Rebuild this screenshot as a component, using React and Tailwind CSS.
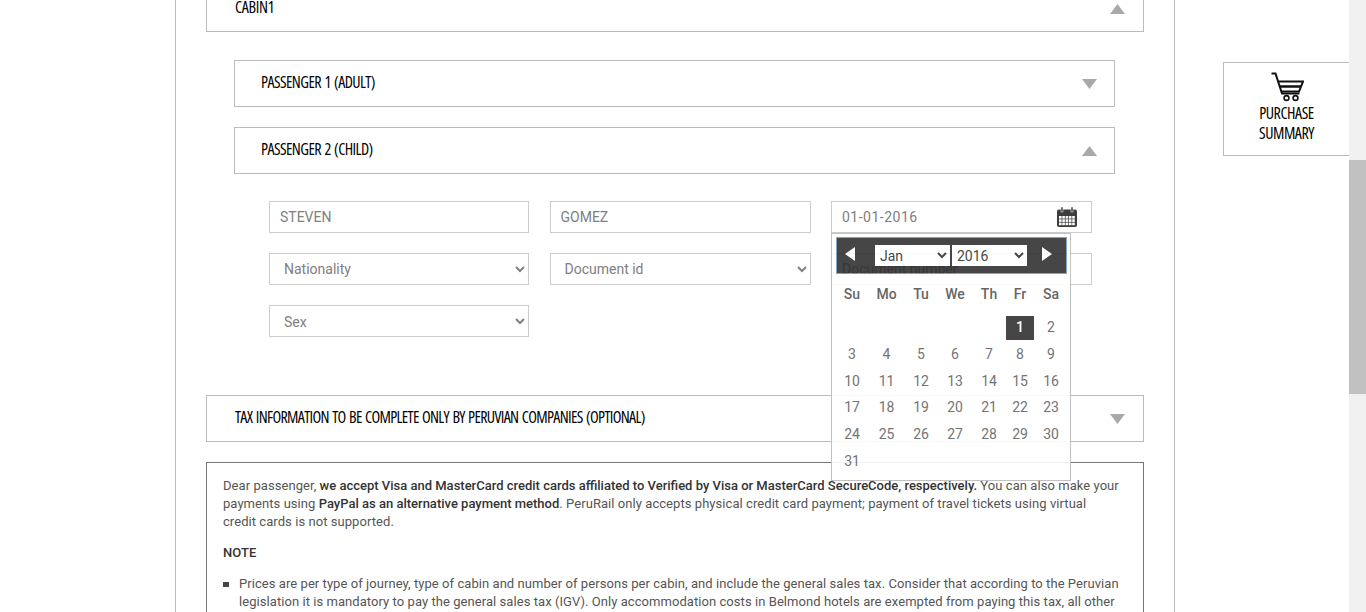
import React from "react";

const heading = "font-['Open_Sans',sans-serif] [font-stretch:75%] text-[16px] text-black uppercase";
const field = "h-[32px] w-full border border-[#ccc] bg-white text-[14px] text-[#808080] outline-none";

const days = [
  ["", "", "", "", "", "1", "2"],
  ["3", "4", "5", "6", "7", "8", "9"],
  ["10", "11", "12", "13", "14", "15", "16"],
  ["17", "18", "19", "20", "21", "22", "23"],
  ["24", "25", "26", "27", "28", "29", "30"],
  ["31", "", "", "", "", "", ""],
];

function Arrow({ up }) {
  return (
    <svg width="15" height="10" viewBox="0 0 15 10" className="shrink-0">
      <path d={up ? "M7.5 0L15 10H0z" : "M0 0H15L7.5 10z"} fill="#a9a9a9" />
    </svg>
  );
}

function Bar({ title, up, className, pad, track = "tracking-[-.55px]" }) {
  return (
    <div className={`flex items-center justify-between border border-[#bbb] bg-white ${pad} ${className}`}>
      <span className={`${heading} ${track} [word-spacing:1px] pb-[4px]`}>{title}</span>
      <Arrow up={up} />
    </div>
  );
}

function Pick({ label, className = "" }) {
  return (
    <select className={`${field} pl-[10px] ${className}`} defaultValue={label}>
      <option>{label}</option>
    </select>
  );
}

function CalendarIcon() {
  const cells = [];
  for (let r = 0; r < 3; r++) {
    for (let c = 0; c < 5; c++) {
      cells.push(<rect key={`${r}-${c}`} x={2 + c * 3.3} y={9 + r * 3.3} width="2.6" height="2.6" fill="#fff" />);
    }
  }
  return (
    <svg width="20" height="20" viewBox="0 0 20 20" className="absolute right-[15px] top-[6px]">
      <rect x="0" y="2.5" width="20" height="17.5" rx="2" fill="#3d3d3d" />
      <rect x="4" y="0" width="2" height="5" fill="#3d3d3d" stroke="#fff" strokeWidth="0.5" />
      <rect x="14" y="0" width="2" height="5" fill="#3d3d3d" stroke="#fff" strokeWidth="0.5" />
      {cells}
    </svg>
  );
}

function CartIcon() {
  return (
    <svg width="34" height="30" viewBox="0 0 34 30">
      <path d="M1.5 1.5H5.5L12 21.5H29.5" fill="none" stroke="#111" strokeWidth="2" />
      <path d="M8 9.5H33L29 19.5H11" fill="none" stroke="#111" strokeWidth="2" />
      <path d="M9.5 14.5H31" stroke="#111" strokeWidth="2.5" />
      <circle cx="16.5" cy="26" r="2.4" fill="none" stroke="#111" strokeWidth="1.6" />
      <circle cx="25.5" cy="26" r="2.4" fill="none" stroke="#111" strokeWidth="1.6" />
    </svg>
  );
}

function Datepicker() {
  return (
    <div className="absolute left-0 top-[32px] z-10 h-[248px] w-[240px] border border-[#bbb] bg-white pl-[4px] pr-[3px] pt-[3px] opacity-90 font-['Roboto',sans-serif]">
      <div className="flex h-[37px] items-center border border-[#6f9fc4] bg-[#333]">
        <svg width="10" height="14" viewBox="0 0 10 14" className="ml-[8px] mb-[4px]">
          <path d="M10 0V14L0 7z" fill="#fff" />
        </svg>
        <select className="ml-[20px] h-[21px] w-[75px] bg-white pl-[1px] text-[14px] text-[#333] outline-none" defaultValue="Jan">
          <option>Jan</option>
        </select>
        <select className="ml-[2px] h-[21px] w-[75px] bg-white pl-[1px] text-[14px] text-[#333] outline-none" defaultValue="2016">
          <option>2016</option>
        </select>
        <svg width="10" height="14" viewBox="0 0 10 14" className="ml-[15px] mb-[4px]">
          <path d="M0 0V14L10 7z" fill="#fff" />
        </svg>
      </div>
      <div className="-ml-[1px] grid grid-cols-[34px_35px_34px_34px_34px_28px_34px] pt-[8px] text-center text-[14px] text-[#555]">
        {["Su", "Mo", "Tu", "We", "Th", "Fr", "Sa"].map((d) => (
          <div key={d} className="h-[24px] font-medium leading-[24px]">{d}</div>
        ))}
      </div>
      <div className="-ml-[1px] mt-[9.5px] grid grid-cols-[34px_35px_34px_34px_34px_28px_34px] auto-rows-[26.8px] text-center text-[14px] text-[#666]">
        {days.flat().map((d, i) => (
          <div key={i} className="flex h-[24px] items-center justify-center">
            {d === "1" ? (
              <span className="flex h-[24px] w-[28px] items-center justify-center bg-[#333] font-medium text-white">1</span>
            ) : (
              d
            )}
          </div>
        ))}
      </div>
    </div>
  );
}

export default function App() {
  return (
    <div className="flex h-[612px] w-[1366px] overflow-hidden bg-white font-['Roboto',sans-serif]">
      {/* MAIN PANEL */}
      <div className="ml-[175px] w-[1000px] shrink-0 border-x border-[#bbb] px-[30px]">
        <Bar title="Cabin1" up className="-mt-[15px] h-[47px]" pad="pl-[28px] pr-[18px]" track="tracking-[-.3px]" />

        <div className="mx-[28px] mt-[28px] w-[881px]">
          <Bar title="Passenger 1 (Adult)" className="h-[47px]" pad="pl-[26px] pr-[17px]" />
          <Bar title="Passenger 2 (Child)" up className="mt-[20px] h-[47px]" pad="pl-[26px] pr-[17px]" />

          <div className="ml-[35px] mt-[27px] grid w-[823px] grid-cols-[260px_261px_261px] gap-x-[20.5px] gap-y-[20px]">
            <input readOnly value="STEVEN" className={`${field} px-[10px]`} />
            <input readOnly value="GOMEZ" className={`${field} px-[10px]`} />
            <div className="relative">
              <input readOnly value="01-01-2016" className={`${field} px-[10px] tracking-[.5px]`} />
              <CalendarIcon />
              <Datepicker />
            </div>
            <Pick label="Nationality" />
            <Pick label="Document id" />
            <input readOnly placeholder="Document number" className={`${field} px-[10px] placeholder:text-[#555]`} />
            <Pick label="Sex" className="pt-[2px]" />
          </div>
        </div>

        <Bar
          title="Tax information to be complete only by Peruvian companies (optional)"
          className="mt-[58px] h-[47px]"
          pad="pl-[28px] pr-[18px]"
          track="tracking-[-.65px]"
        />

        {/* PAYMENT NOTE */}
        <div className="mt-[20px] h-[220px] border border-[#777] px-[16px] pt-[14px] text-[13px] leading-[18px] tracking-[.06px] text-[#555]">
          <p>
            Dear passenger, <b className="font-medium tracking-normal text-[#333]">we accept Visa and MasterCard credit cards affiliated to Verified by Visa or MasterCard SecureCode, respectively.</b> You can also make your payments using <b className="font-medium tracking-normal text-[#333]">PayPal as an alternative payment method</b>. PeruRail only accepts physical credit card payment; payment of travel tickets using virtual<br />credit cards is not supported.
          </p>
          <p className="mt-[13px] font-medium text-[#333]">NOTE</p>
          <div className="mt-[13px] flex">
            <span className="mr-[10px] mt-[7px] h-[5px] w-[6px] shrink-0 bg-[#444]" />
            <p>
              Prices are per type of journey, type of cabin and number of persons per cabin, and include the general sales tax. Consider that according to the Peruvian<br />legislation it is mandatory to pay the general sales tax (IGV). Only accommodation costs in Belmond hotels are exempted from paying this tax, all other
            </p>
          </div>
        </div>
      </div>

      {/* PURCHASE SUMMARY */}
      <div className="ml-[48px] mt-[62px] flex h-[94px] w-[126px] shrink-0 flex-col items-center border-y border-l border-[#bbb] pt-[9px]">
        <CartIcon />
        <div className={`${heading} mt-[1px] text-center leading-[20px] tracking-[-.45px]`}>
          Purchase<br />Summary
        </div>
      </div>

      {/* SCROLLBAR */}
      <div className="w-[17px] shrink-0 bg-[#f1f1f1] pt-[160px]">
        <div className="h-[234px] bg-[#c1c1c1]" />
      </div>
    </div>
  );
}
